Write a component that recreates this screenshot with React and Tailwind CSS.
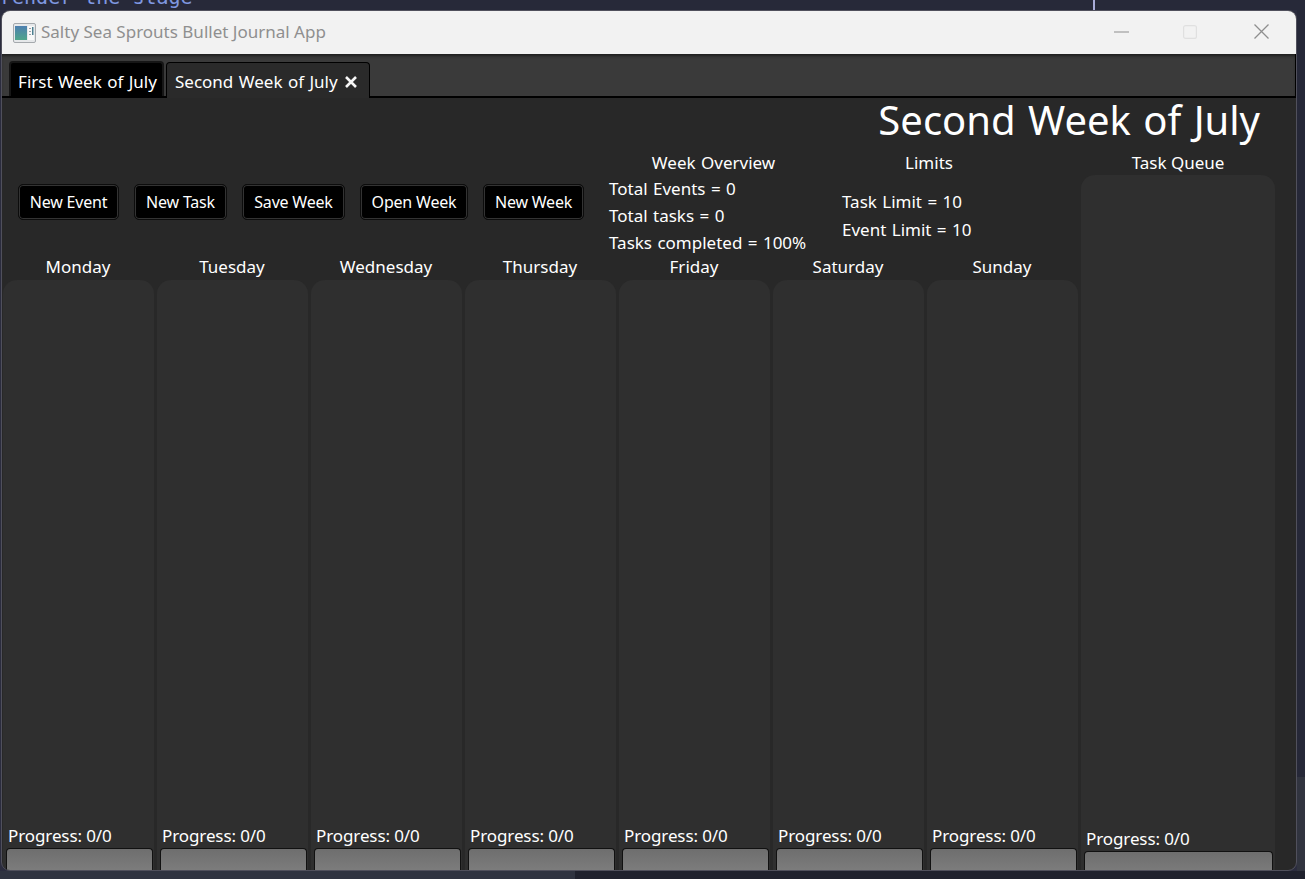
const F = { fontFamily: '"Noto Sans", sans-serif' };

function Button({ label, w }) {
  return (
    <button className="h-9 rounded-[5px] border border-[#0c0c0c] bg-black shadow-[inset_0_0_0_1px_#333] text-white text-[16px] tracking-[-0.2px] shrink-0" style={{ width: w }}>
      {label}
    </button>
  );
}

function Bar({ className }) {
  return <div className={`h-[22px] rounded-t-[4px] border border-b-0 border-[#111] bg-linear-to-b from-[#6e6e6e] to-[#7c7c7c] ${className}`} />;
}

function Day({ label }) {
  return (
    <div className="w-[151px] flex flex-col shrink-0">
      <div className="h-[25px] text-center text-white text-[17px] leading-[23px] pr-[1px]">{label}</div>
      <div className="h-[568px] rounded-t-[14px] bg-[#2f2f2f] flex flex-col justify-end">
        <div className="px-[5px] h-[25px] text-white text-[17px] leading-[25px] -tracking-[0.1px]">Progress: 0/0</div>
      </div>
      <div className="bg-[#2f2f2f] pl-[3px] pr-[1px]">
        <Bar className="w-[147px]" />
      </div>
    </div>
  );
}

const days = ['Monday', 'Tuesday', 'Wednesday', 'Thursday', 'Friday', 'Saturday', 'Sunday'];

export default function App() {
  return (
    <div className="w-[1305px] h-[879px] overflow-hidden bg-[#2b2c3e] flex flex-col" style={F}>
      <div className="h-[10px] shrink-0 overflow-hidden bg-[#272939] flex">
        <div className="w-[1093px] overflow-hidden">
          <div className="text-[#7f98e0] text-[20px] leading-[20px] -mt-[13px] whitespace-pre" style={{ fontFamily: '"DejaVu Sans Mono", monospace' }}>render the stage</div>
        </div>
        <div className="w-[2px] bg-[#a9acd8]" />
      </div>
      <div className="flex h-[861px] shrink-0">
        <div className="w-[1px] shrink-0 bg-[#2b2c3e]" />
        <div className="w-[1296px] shrink-0 rounded-[9px] border border-[#50505c] overflow-hidden flex flex-col bg-[#282828]">
          <div className="h-[43px] shrink-0 bg-[#f2f2f2] flex items-center pl-[11px]">
            <svg width="23" height="20" viewBox="0 0 23 20" className="shrink-0">
              <defs>
                <linearGradient id="pane" x1="0" y1="0" x2="0" y2="1">
                  <stop offset="0" stopColor="#4d7fb0" />
                  <stop offset="1" stopColor="#4fa58a" />
                </linearGradient>
              </defs>
              <rect x="0.5" y="0.5" width="22" height="19" rx="1.5" fill="#e6e8ea" stroke="#a5a9ad" />
              <rect x="2" y="3" width="12" height="14" fill="url(#pane)" />
              <rect x="15" y="3" width="6" height="14" fill="#f8f8f8" />
              <rect x="16" y="5" width="2" height="1" fill="#9aa0a6" />
              <rect x="16" y="8" width="2" height="1" fill="#9aa0a6" />
              <rect x="16" y="11" width="2" height="1" fill="#9aa0a6" />
              <rect x="19" y="4" width="1.5" height="8" fill="#4d7f90" />
            </svg>
            <span className="ml-[5px] mb-[2px] text-[#8f8f8f] text-[17px]">Salty Sea Sprouts Bullet Journal App</span>
            <div className="flex-1" />
            <svg width="15" height="2" viewBox="0 0 15 2" className="mr-[54px] mb-[2px]"><rect width="15" height="1" y="0.5" fill="#8e8e8e" /></svg>
            <svg width="14" height="14" viewBox="0 0 14 14" className="mr-[57px] mb-[2px]"><rect x="0.6" y="0.6" width="12.8" height="12.8" rx="2" fill="none" stroke="#e0e0e0" strokeWidth="1.2" /></svg>
            <svg width="15" height="15" viewBox="0 0 15 15" className="mr-[27px] mb-[2px]"><path d="M0.5 0.5 L14.5 14.5 M14.5 0.5 L0.5 14.5" stroke="#8e8e8e" strokeWidth="1.3" /></svg>
          </div>
          <div className="h-[44px] shrink-0 bg-[#3a3a3a] border-b-2 border-r border-black flex items-end pl-[7px] gap-[2px] shadow-[inset_0_3px_3px_-1px_#1f1f1f] [word-spacing:1px]">
            <div className="w-[155px] h-[35px] rounded-t-[4px] border-2 border-b-0 border-[#161616] bg-black text-white text-[17px] flex items-center justify-center whitespace-nowrap pt-[5px] pl-[2px]">First Week of July</div>
            <div className="w-[204px] h-[36px] rounded-t-[4px] border border-b-0 border-black bg-[#2a2a2a] text-white text-[17px] flex items-center pl-[8px] whitespace-nowrap -mb-[2px] pt-[3px]">
              Second Week of July
              <svg width="14" height="14" viewBox="0 0 14 14" className="ml-[6px]"><path d="M2 2 L12 12 M12 2 L2 12" stroke="#f6f6f6" strokeWidth="2.6" /></svg>
            </div>
          </div>
          <div className="h-[52px] shrink-0 text-right pr-[36px] text-white text-[40px] leading-[44px] [word-spacing:2px] whitespace-nowrap">Second Week of July</div>
          <div className="flex flex-1 min-h-0 pl-[1px]">
            <div className="w-[1078px] shrink-0 flex flex-col">
              <div className="h-[105px] shrink-0 flex">
                <div className="flex items-start gap-[15px] pl-[15px] pt-[34px] w-[606px] shrink-0">
                  <Button label="New Event" w={101} />
                  <Button label="New Task" w={93} />
                  <Button label="Save Week" w={103} />
                  <Button label="Open Week" w={108} />
                  <Button label="New Week" w={101} />
                </div>
                <div className="w-[209px] shrink-0 text-white text-[17px] [word-spacing:1px] whitespace-nowrap">
                  <div className="h-[25px] leading-[26px] text-center">Week Overview</div>
                  <div className="h-[27px] leading-[27px]">Total Events = 0</div>
                  <div className="h-[27px] leading-[27px]">Total tasks = 0</div>
                  <div className="h-[27px] leading-[27px]">Tasks completed = 100%</div>
                </div>
                <div className="ml-[24px] w-[174px] shrink-0 text-white text-[17px] [word-spacing:1px] whitespace-nowrap">
                  <div className="h-[38px] leading-[26px] text-center">Limits</div>
                  <div className="h-[28px] leading-[28px]">Task Limit = 10</div>
                  <div className="h-[28px] leading-[28px]">Event Limit = 10</div>
                </div>
              </div>
              <div className="flex gap-[3px] min-h-0 shrink-0">
                {days.map((d) => <Day key={d} label={d} />)}
              </div>
            </div>
            <div className="w-[194px] shrink-0 flex flex-col">
              <div className="h-[25px] shrink-0 text-center text-white text-[17px] leading-[26px]">Task Queue</div>
              <div className="h-[676px] shrink-0 rounded-t-[14px] bg-[#2f2f2f] flex flex-col justify-end px-[5px]">
                <div className="h-[25px] text-white text-[17px] leading-[25px] -tracking-[0.1px]">Progress: 0/0</div>
              </div>
              <div className="bg-[#2f2f2f] pl-[3px] pr-[2px] shrink-0">
                <Bar className="w-[189px]" />
              </div>
            </div>
          </div>
        </div>
        <div className="flex-1 flex flex-col">
          <div className="h-[767px] bg-[#262838]" />
          <div className="flex-1 bg-[#31343f]" />
        </div>
      </div>
      <div className="flex-1 flex">
        <div className="w-[575px] bg-[#2f3340]" />
        <div className="flex-1 bg-[#1f212d]" />
      </div>
    </div>
  );
}
